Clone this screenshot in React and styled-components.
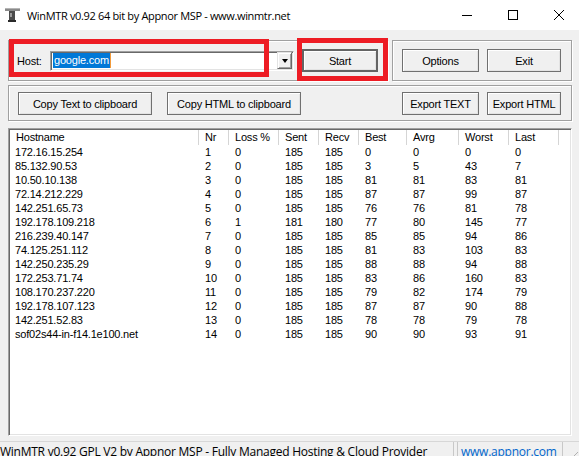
import React from "react";
import styled, { createGlobalStyle } from "styled-components";

const GlobalStyle = createGlobalStyle`
  html, body {
    margin: 0;
    padding: 0;
    background: #f0f0f0;
  }
`;

const hops = [
  ["172.16.15.254", 1, 0, 185, 185, 0, 0, 0, 0],
  ["85.132.90.53", 2, 0, 185, 185, 3, 5, 43, 7],
  ["10.50.10.138", 3, 0, 185, 185, 81, 81, 83, 81],
  ["72.14.212.229", 4, 0, 185, 185, 87, 87, 99, 87],
  ["142.251.65.73", 5, 0, 185, 185, 76, 76, 81, 78],
  ["192.178.109.218", 6, 1, 181, 180, 77, 80, 145, 77],
  ["216.239.40.147", 7, 0, 185, 185, 85, 85, 94, 86],
  ["74.125.251.112", 8, 0, 185, 185, 81, 83, 103, 83],
  ["142.250.235.29", 9, 0, 185, 185, 88, 88, 94, 88],
  ["172.253.71.74", 10, 0, 185, 185, 83, 86, 160, 83],
  ["108.170.237.220", 11, 0, 185, 185, 79, 82, 174, 79],
  ["192.178.107.123", 12, 0, 185, 185, 87, 87, 90, 88],
  ["142.251.52.83", 13, 0, 185, 185, 78, 78, 79, 78],
  ["sof02s44-in-f14.1e100.net", 14, 0, 185, 185, 90, 90, 93, 91],
];

const columns = ["Hostname", "Nr", "Loss %", "Sent", "Recv", "Best", "Avrg", "Worst", "Last"];

const COLS = "189px 30px 50px 40px 40px 48px 52px 50px 50px 1fr";

// window frame
const Window = styled.div`
  position: relative;
  width: 579px;
  height: 456px;
  overflow: hidden;
  background: #f0f0f0;
  font-family: "Liberation Sans", Arial, sans-serif;
  font-size: 11px;
  letter-spacing: -0.2px;
  color: #000;
`;

const TitleBar = styled.div`
  height: 30px;
  background: #fff;
  display: flex;
  align-items: center;
  overflow: hidden;
`;

const AppIcon = styled.svg`
  margin-left: 4px;
  flex: none;
`;

const Title = styled.div`
  margin-left: 7px;
  font-family: "Open Sans", "Noto Sans", sans-serif;
  font-size: 11px;
  letter-spacing: -0.34px;
  color: #000;
  flex: 1;
  white-space: nowrap;
`;

const Controls = styled.div`
  display: flex;
  height: 30px;
  margin-right: -3px;
`;

const ControlBtn = styled.div`
  width: 46px;
  height: 30px;
  display: flex;
  align-items: center;
  justify-content: center;
`;

const Body = styled.div`
  padding: 10px 7px 0 8px;
`;

const Row = styled.div`
  display: flex;
  gap: 4px;
`;

const GroupBox = styled.div`
  box-sizing: border-box;
  width: ${(p) => p.$w || "auto"};
  flex: ${(p) => (p.$w ? "none" : "1")};
  height: ${(p) => p.$h}px;
  margin-top: ${(p) => p.$mt || 0}px;
  border: 1px solid #a0a0a0;
  box-shadow: inset 1px 1px 0 #fff, 1px 1px 0 #fff;
  display: flex;
  align-items: ${(p) => p.$align || "center"};
  padding: ${(p) => p.$pad || "0 0 0 8px"};
  gap: 8px;
`;

const HostLabel = styled.div`
  width: 25px;
  flex: none;
`;

const Combo = styled.div`
  box-sizing: border-box;
  width: 244px;
  height: 20px;
  flex: none;
  background: #fff;
  border: 1px solid;
  border-color: #a0a0a0 #fff #fff #a0a0a0;
  box-shadow: inset 1px 1px 0 #696969, inset -1px -1px 0 #e3e3e3;
  display: flex;
  align-items: center;
  padding: 0 1px 0 2px;
`;

const ComboText = styled.div`
  flex: 1;
  display: flex;
`;

const Selected = styled.span`
  background: #0078d7;
  color: #fff;
  line-height: 15px;
  padding: 0 1px;
  border-right: 1px solid #f29a3a;
`;

const DropBtn = styled.div`
  box-sizing: border-box;
  width: 15px;
  height: 17px;
  background: #f0f0f0;
  border: 1px solid;
  border-color: #e3e3e3 #696969 #696969 #e3e3e3;
  box-shadow: inset 1px 1px 0 #fff, inset -1px -1px 0 #a0a0a0;
  display: flex;
  align-items: center;
  justify-content: center;
`;

const Arrow = styled.div`
  width: 0;
  height: 0;
  border-left: 3.5px solid transparent;
  border-right: 3.5px solid transparent;
  border-top: 4px solid #000;
`;

const Button = styled.div`
  box-sizing: border-box;
  width: ${(p) => p.$w}px;
  height: 23px;
  flex: none;
  margin-left: ${(p) => (p.$push ? "auto" : `${p.$ml || 0}px`)};
  background: #f0f0f0;
  border: ${(p) => (p.$default ? "2px solid #646464" : "1px solid #707070")};
  box-shadow: inset 1px 1px 0 #fff, inset -1px -1px 0 #e3e3e3;
  display: flex;
  align-items: center;
  justify-content: center;
  white-space: nowrap;
`;

const List = styled.div`
  box-sizing: border-box;
  margin-top: 7px;
  height: 308px;
  background: #fff;
  border: 1px solid;
  border-color: #a0a0a0 #fff #fff #a0a0a0;
  box-shadow: inset 1px 1px 0 #696969, inset -1px -1px 0 #e3e3e3;
  padding: 1px;
`;

const Header = styled.div`
  display: grid;
  grid-template-columns: ${COLS};
  height: 15px;
`;

const HeadCell = styled.div`
  line-height: 15px;
  padding-left: 6px;
  border-right: ${(p) => (p.$last ? "none" : "1px solid #d5d5d5")};
  white-space: nowrap;
`;

const DataRow = styled.div`
  display: grid;
  grid-template-columns: ${COLS};
  height: 14px;
`;

const Cell = styled.div`
  line-height: 14px;
  padding-left: ${(p) => p.$pl || 6}px;
  white-space: nowrap;
`;

const StatusBar = styled.div`
  margin-top: 5px;
  border-top: 1px solid #d7d7d7;
  display: flex;
  height: 20px;
  font-family: "Open Sans", "Noto Sans", sans-serif;
  font-size: 12px;
  letter-spacing: -0.25px;
`;

const Panel = styled.div`
  box-sizing: border-box;
  width: ${(p) => p.$w}px;
  margin-left: ${(p) => p.$ml || 0}px;
  border-right: 1px solid #c8c8c8;
  border-left: ${(p) => (p.$ml ? "1px solid #c8c8c8" : "none")};
  padding: 1px 0 0 ${(p) => p.$pl || 0}px;
  color: ${(p) => p.$color || "#000"};
  white-space: nowrap;
  overflow: hidden;
`;

const Grip = styled.svg`
  margin-left: auto;
  margin-top: 6px;
`;

// red annotation frames drawn over the screenshot
const Highlight = styled.div`
  position: absolute;
  box-sizing: border-box;
  left: ${(p) => p.$x}px;
  top: ${(p) => p.$y}px;
  width: ${(p) => p.$w}px;
  height: ${(p) => p.$h}px;
  border: 5px solid #ed1c24;
  pointer-events: none;
`;

export default function App() {
  return (
    <>
      <GlobalStyle />
      <Window>
        <TitleBar>
          <AppIcon width="16" height="16" viewBox="0 0 16 16">
            <rect x="1" y="1" width="15" height="3" fill="#8a8a8a" />
            <rect x="1" y="1" width="15" height="1" fill="#b5b5b5" />
            <rect x="5" y="4" width="6" height="10" fill="#4a4a4a" />
            <rect x="6" y="6" width="2" height="4" fill="#9a9a9a" />
            <rect x="4" y="13" width="8" height="2" fill="#2a2a2a" />
          </AppIcon>
          <Title>WinMTR v0.92 64 bit by Appnor MSP - www.winmtr.net</Title>
          <Controls>
            <ControlBtn>
              <svg width="10" height="10" viewBox="0 0 10 10">
                <path d="M0 5.5h10" stroke="#000" strokeWidth="1" />
              </svg>
            </ControlBtn>
            <ControlBtn>
              <svg width="10" height="10" viewBox="0 0 10 10">
                <rect x="0.5" y="0.5" width="9" height="9" fill="none" stroke="#000" />
              </svg>
            </ControlBtn>
            <ControlBtn>
              <svg width="10" height="10" viewBox="0 0 10 10">
                <path d="M0 0L10 10M10 0L0 10" stroke="#000" strokeWidth="1" />
              </svg>
            </ControlBtn>
          </Controls>
        </TitleBar>

        <Body>
          <Row>
            <GroupBox $w="380px" $h={41}>
              <HostLabel>Host:</HostLabel>
              <Combo>
                <ComboText>
                  <Selected>google.com</Selected>
                </ComboText>
                <DropBtn>
                  <Arrow />
                </DropBtn>
              </Combo>
              <Button $w={76} $default>Start</Button>
            </GroupBox>
            <GroupBox $h={41} $pad="0 0 0 9px">
              <Button $w={77}>Options</Button>
              <Button $w={74}>Exit</Button>
            </GroupBox>
          </Row>

          <GroupBox $h={36} $mt={4} $align="flex-start" $pad="6px 10px 0 9px">
            <Button $w={134}>Copy Text to clipboard</Button>
            <Button $w={134} $ml={7}>Copy HTML to clipboard</Button>
            <Button $w={77} $push>Export TEXT</Button>
            <Button $w={74}>Export HTML</Button>
          </GroupBox>

          <List>
            <Header>
              {columns.map((c) => (
                <HeadCell key={c}>{c}</HeadCell>
              ))}
              <HeadCell $last />
            </Header>
            {hops.map((h) => (
              <DataRow key={h[1]}>
                {h.map((v, i) => (
                  <Cell key={i} $pl={i === 0 ? 5 : 6}>{v}</Cell>
                ))}
                <Cell />
              </DataRow>
            ))}
          </List>
        </Body>

        <StatusBar>
          <Panel $w={454}>WinMTR v0.92 GPL V2 by Appnor MSP - Fully Managed Hosting &amp; Cloud Provider</Panel>
          <Panel $w={106} $ml={3} $pl={3} $color="#0066cc">www.appnor.com</Panel>
          <Grip width="12" height="12" viewBox="0 0 12 12">
            <path d="M11 4L4 11M11 8L8 11" stroke="#b0b0b0" strokeWidth="1" />
          </Grip>
        </StatusBar>

        <Highlight $x={9} $y={39} $w={260} $h={38} />
        <Highlight $x={297} $y={38} $w={91} $h={43} />
      </Window>
    </>
  );
}
